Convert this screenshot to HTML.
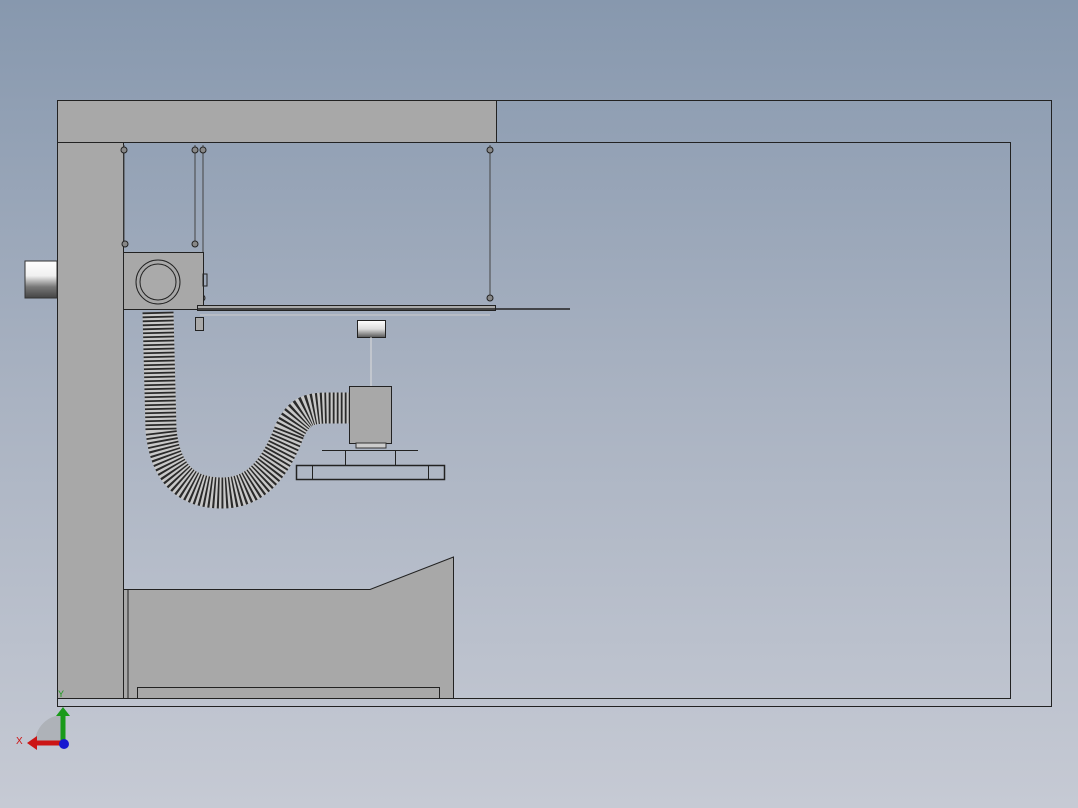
<!DOCTYPE html>
<html><head><style>
html,body{margin:0;padding:0;width:1078px;height:808px;overflow:hidden;background:linear-gradient(#8798ae,#aab3c2 50%,#c6cad4);}
svg{position:absolute;left:0;top:0}
</style></head><body>
<svg width="1078" height="808" viewBox="0 0 1078 808">
<defs>
<linearGradient id="pipe" x1="0" y1="0" x2="0" y2="1"><stop offset="0" stop-color="#fff"/><stop offset="0.4" stop-color="#f0f0f0"/><stop offset="0.7" stop-color="#777"/><stop offset="1" stop-color="#444"/></linearGradient>
<linearGradient id="cyl" x1="0" y1="0" x2="0" y2="1"><stop offset="0" stop-color="#fff"/><stop offset="0.5" stop-color="#ddd"/><stop offset="1" stop-color="#555"/></linearGradient>
</defs>
<g stroke="#222" stroke-width="1">
<rect x="57.5" y="100.5" width="994" height="606" fill="none"/>
<rect x="57.5" y="100.5" width="439" height="42" fill="#a8a8a8"/>
<rect x="57.5" y="142.5" width="66" height="556" fill="#a8a8a8"/>
<rect x="123.5" y="142.5" width="887" height="556" fill="none"/>
<polygon points="123.5,589.5 370,589.5 453.5,557 453.5,698.5 123.5,698.5" fill="#a8a8a8"/>
<line x1="128" y1="589.5" x2="128" y2="698"/>
<rect x="137.5" y="687.5" width="302" height="11" fill="#a8a8a8"/>
</g>
<rect x="25" y="261" width="32" height="37" fill="url(#pipe)" stroke="#333" stroke-width="1"/>
<g stroke="#444" stroke-width="1" fill="none">
<line x1="124" y1="145" x2="124" y2="245"/>
<line x1="195" y1="145" x2="195" y2="245"/>
<line x1="203" y1="145" x2="203" y2="300"/>
<line x1="490" y1="145" x2="490" y2="300"/>
</g>
<g fill="#888" stroke="#222">
<circle cx="124" cy="150" r="3"/><circle cx="195" cy="150" r="3"/><circle cx="203" cy="150" r="3"/><circle cx="490" cy="150" r="3"/>
<circle cx="125" cy="244" r="3"/><circle cx="195" cy="244" r="3"/><circle cx="202" cy="298" r="3"/><circle cx="490" cy="298" r="3"/>
</g>
<rect x="123.5" y="252.5" width="80" height="57" fill="#a8a8a8" stroke="#222"/>
<circle cx="158" cy="282" r="22" fill="#a8a8a8" stroke="#222"/>
<circle cx="158" cy="282" r="18" fill="#aaa" stroke="#222"/>
<rect x="203" y="274" width="4" height="12" fill="none" stroke="#222"/>
<rect x="197.5" y="305.5" width="298" height="5" fill="#aaa" stroke="#222"/>
<line x1="197" y1="309" x2="570" y2="309" stroke="#222" stroke-width="1.5"/>
<line x1="200" y1="315" x2="490" y2="315" stroke="#ccc" stroke-width="1"/>
<rect x="195.5" y="317.5" width="8" height="13" fill="#aaa" stroke="#222"/>
<path d="M158,312 L161,430 C166,482 195,493 222,493 C255,493 275,470 290,430 C300,410 310,408 330,408 L350,408" fill="none" stroke="#c8c8c8" stroke-width="31"/>
<path d="M158,312 L161,430 C166,482 195,493 222,493 C255,493 275,470 290,430 C300,410 310,408 330,408 L350,408" fill="none" stroke="#2a2a2a" stroke-width="31" stroke-dasharray="1.8 2.2"/>
<rect x="357.5" y="320.5" width="28" height="17" fill="url(#cyl)" stroke="#222"/>
<line x1="371" y1="337" x2="371" y2="386" stroke="#ddd"/>
<rect x="349.5" y="386.5" width="42" height="57" fill="#a8a8a8" stroke="#222"/>
<rect x="356" y="443" width="30" height="5" fill="#ccc" stroke="#333"/>
<g stroke="#222" fill="none">
<line x1="322" y1="450.5" x2="418" y2="450.5"/>
<line x1="345.5" y1="450" x2="345.5" y2="465"/><line x1="395.5" y1="450" x2="395.5" y2="465"/>
<rect x="296.5" y="465.5" width="148" height="14" stroke-width="1.5"/>
<line x1="312.5" y1="466" x2="312.5" y2="479"/><line x1="428.5" y1="466" x2="428.5" y2="479"/>
</g>
<path d="M63,743 L35,743 A28,28 0 0 1 63,715 Z" fill="#a9acb2" opacity="0.8"/>
<line x1="63" y1="743" x2="63" y2="716" stroke="#1a9a1a" stroke-width="5"/>
<polygon points="56,716 70,716 63,707" fill="#1a9a1a"/>
<line x1="63" y1="743" x2="36" y2="743" stroke="#cc1515" stroke-width="5"/>
<polygon points="37,736 37,750 27,743" fill="#cc1515"/>
<circle cx="64" cy="744" r="5" fill="#1818d0"/>
<text x="58" y="697" font-family="Liberation Sans,sans-serif" font-size="9" fill="#1a9a1a">Y</text>
<text x="16" y="744" font-family="Liberation Sans,sans-serif" font-size="10" fill="#cc1515">X</text>
</svg>
</body></html>
